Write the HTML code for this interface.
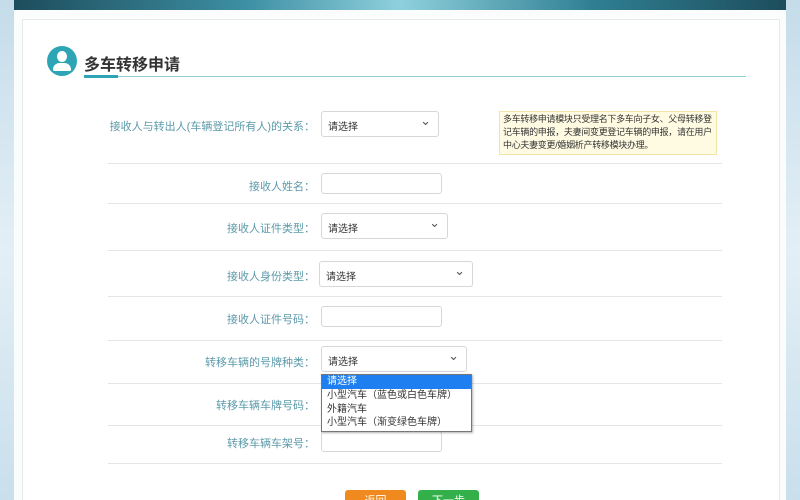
<!DOCTYPE html>
<html><head><meta charset="utf-8"><style>
*{margin:0;padding:0;box-sizing:border-box}
html,body{width:800px;height:500px;overflow:hidden}
body{background:#d3e6f0;font-family:"Liberation Sans","Noto Sans CJK SC",sans-serif;position:relative}
.a{position:absolute}
.lbl{position:absolute;right:485px;font-size:11px;color:#5c9aaa;white-space:nowrap}
.line{position:absolute;left:108px;width:614px;height:1px;background:#e2e6e8}
.sel,.inp{position:absolute;height:26px;border:1px solid #d4d8da;border-radius:3px;background:#fff;font-size:10px;color:#333;padding:6px 0 0 6px}
.sel:after{content:"⌄";position:absolute;right:7px;top:1px;font-size:13px;color:#555}
</style></head><body>
<div class="a" style="left:0;top:0;width:14px;height:500px;background:linear-gradient(#c5dcea,#e3eff6,#c9dfec)"></div>
<div class="a" style="left:786px;top:0;width:14px;height:500px;background:linear-gradient(#c5dcea,#e3eff6,#c9dfec)"></div>
<div class="a" style="left:14px;top:0;width:772px;height:10px;background:linear-gradient(90deg,#1d4d5c,#3d8fa3 30%,#8fd0dd 50%,#2f7f93 75%,#1d4d5c)"></div>
<div class="a" style="left:14px;top:10px;width:772px;height:490px;background:#fbfcfc"></div>
<div class="a" style="left:22px;top:19px;width:758px;height:481px;background:#fff;border:1px solid #e6e9ea;border-bottom:none"></div>
<div class="a" style="left:47px;top:46px;width:30px;height:30px;border-radius:50%;background:#2ea5b4"></div>
<div class="a" style="left:57px;top:51px;width:10px;height:11px;border-radius:50%;background:#fff"></div>
<div class="a" style="left:53px;top:63px;width:18px;height:8px;border-radius:9px 9px 2px 2px;background:#fff"></div>
<div class="a" style="left:84px;top:51px;font-size:16px;font-weight:bold;color:#333">多车转移申请</div>
<div class="a" style="left:84px;top:76px;width:662px;height:1px;background:#8ccfd6"></div>
<div class="a" style="left:84px;top:75px;width:34px;height:3px;background:#2ea5b4"></div>

<div class="lbl" style="top:118px">接收人与转出人(车辆登记所有人)的关系：</div>
<div class="sel" style="left:321px;top:111px;width:118px">请选择</div>
<div class="a" style="left:499px;top:111px;width:218px;height:44px;background:#fffbe3;border:1px solid #f1e4a6;font-size:9px;line-height:13px;padding:1px 3px;color:#333;letter-spacing:-0.3px">多车转移申请模块只受理名下多车向子女、父母转移登记车辆的申报，夫妻间变更登记车辆的申报，请在用户中心夫妻变更/婚姻析产转移模块办理。</div>
<div class="line" style="top:163px"></div>
<div class="lbl" style="top:178px">接收人姓名：</div>
<div class="inp" style="left:321px;top:173px;width:121px;height:21px"></div>
<div class="line" style="top:203px"></div>
<div class="lbl" style="top:220px">接收人证件类型：</div>
<div class="sel" style="left:321px;top:213px;width:127px">请选择</div>
<div class="line" style="top:250px"></div>
<div class="lbl" style="top:268px">接收人身份类型：</div>
<div class="sel" style="left:319px;top:261px;width:154px">请选择</div>
<div class="line" style="top:296px"></div>
<div class="lbl" style="top:311px">接收人证件号码：</div>
<div class="inp" style="left:321px;top:306px;width:121px;height:21px"></div>
<div class="line" style="top:340px"></div>
<div class="lbl" style="top:354px">转移车辆的号牌种类：</div>
<div class="sel" style="left:321px;top:346px;width:146px">请选择</div>
<div class="line" style="top:383px"></div>
<div class="lbl" style="top:397px">转移车辆车牌号码：</div>
<div class="line" style="top:425px"></div>
<div class="lbl" style="top:435px">转移车辆车架号：</div>
<div class="inp" style="left:321px;top:431px;width:121px;height:21px"></div>
<div class="line" style="top:463px"></div>
<div class="a" style="left:321px;top:374px;width:151px;height:58px;background:#fff;border:1px solid #777;box-shadow:1px 1px 2px rgba(0,0,0,.3);font-size:10px;line-height:13.5px;color:#333">
<div style="background:#1e7ff0;color:#fff;padding-left:5px;height:14px">请选择</div>
<div style="padding-left:5px">小型汽车（蓝色或白色车牌）</div>
<div style="padding-left:5px">外籍汽车</div>
<div style="padding-left:5px">小型汽车（渐变绿色车牌）</div>
</div>
<div class="a" style="left:345px;top:490px;width:61px;height:20px;border-radius:3px;background:#f08a1e;color:#fff;font-size:11px;text-align:center;padding-top:2px">返回</div>
<div class="a" style="left:418px;top:490px;width:61px;height:20px;border-radius:3px;background:#34b04a;color:#fff;font-size:11px;text-align:center;padding-top:2px">下一步</div>
</body></html>
